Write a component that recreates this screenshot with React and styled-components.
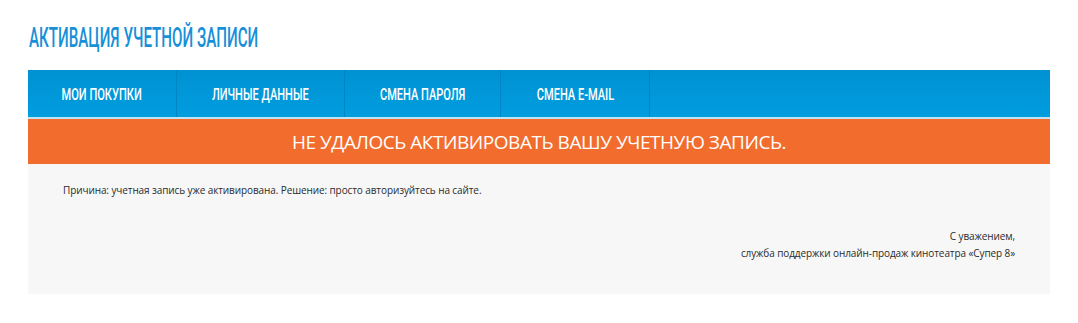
import React from "react";
import styled, { createGlobalStyle } from "styled-components";

const Global = createGlobalStyle`
  html, body { margin: 0; padding: 0; background: #fff; }
  body { font-family: "Open Sans", "Liberation Sans", sans-serif; }
`;

const Page = styled.div`
  padding: 21px 28px 0 28px;
  width: 1022px;
`;

const Title = styled.h1`
  margin: 0 0 0 1px;
  height: 49px;
  font-weight: normal;
  font-size: 27px;
  line-height: 32px;
  color: #1790d8;
  text-transform: uppercase;
  white-space: nowrap;
`;

const Condensed = styled.span`
  display: inline-block;
  font-family: "Roboto", "Liberation Sans", sans-serif;
  font-weight: ${(p) => p.weight || 500};
  transform: scaleX(${(p) => p.sx});
  transform-origin: ${(p) => p.origin || "center"} center;
  white-space: nowrap;
`;

const Nav = styled.nav`
  display: flex;
  height: 47px;
  background: linear-gradient(#0092d2, #009ddf);
  border-bottom: 2px solid #bfe4f5;
`;

const NavItem = styled.a`
  display: flex;
  align-items: center;
  justify-content: center;
  width: ${(p) => p.w}px;
  border-right: 1px solid #0085c4;
  color: #fff;
  font-size: 17px;
  text-decoration: none;
  text-transform: uppercase;
  box-sizing: border-box;
`;

const Alert = styled.div`
  height: 45px;
  background: #f26d2d;
  color: #fff;
  display: flex;
  align-items: center;
  justify-content: center;
  font-family: "Open Sans", sans-serif;
  font-size: 19px;
  letter-spacing: -0.45px;
  text-transform: uppercase;
`;

const Content = styled.div`
  background: #f7f7f7;
  height: 130px;
  box-sizing: border-box;
  padding: 18px 35px 0 35px;
  font-family: "Open Sans", sans-serif;
  font-size: 10px;
  letter-spacing: -0.1px;
  color: #2b2b2b;
`;

const Reason = styled.p`
  margin: 0;
  line-height: 16px;
`;

const Sign = styled.p`
  margin: 30px 0 0 0;
  text-align: right;
  line-height: 17px;
`;

const items = [
  ["Мои покупки", 149],
  ["Личные данные", 168],
  ["Смена пароля", 156],
  ["Смена E-mail", 149],
];

export default function App() {
  return (
    <Page>
      <Global />
      <Title>
        <Condensed sx={0.561} origin="left">Активация учетной записи</Condensed>
      </Title>
      <Nav>
        {items.map(([t, w]) => (
          <NavItem key={t} w={w} href="#">
            <Condensed sx={0.65}>{t}</Condensed>
          </NavItem>
        ))}
      </Nav>
      <Alert>Не удалось активировать вашу учетную запись.</Alert>
      <Content>
        <Reason>Причина: учетная запись уже активирована. Решение: просто авторизуйтесь на сайте.</Reason>
        <Sign>
          С уважением,
          <br />
          служба поддержки онлайн-продаж кинотеатра «Супер 8»
        </Sign>
      </Content>
    </Page>
  );
}
